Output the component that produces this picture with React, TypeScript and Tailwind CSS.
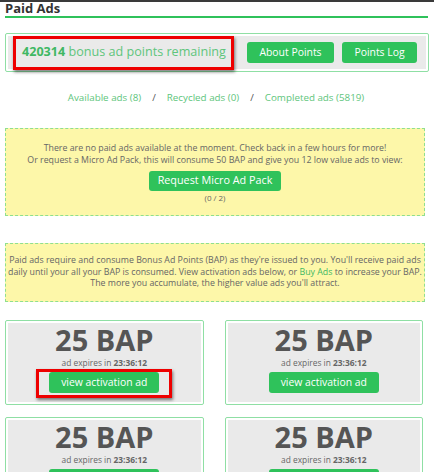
const green = "bg-[#2fc25b]";

function GreenButton({ label, className }: { label: string; className: string }) {
  return (
    <button
      className={`${green} rounded-[3px] text-white leading-none whitespace-nowrap flex items-center justify-center ${className}`}
    >
      {label}
    </button>
  );
}

function AdCard({ highlight }: { highlight?: boolean }) {
  return (
    <div className="border border-[#8fdfa4] rounded-[2px] p-[2px] bg-white">
      <div className="bg-[#eaeaea] h-[79px] flex flex-col items-center">
        <div className="text-[29px] font-bold text-[#555] leading-[30px] mt-[2px]">25 BAP</div>
        <div className="text-[8.4px] text-[#666] leading-[10px] mt-[3px] whitespace-nowrap">
          ad expires in <span className="font-bold">23:36:12</span>
        </div>
        {highlight ? (
          <div className="mt-[1px] border-[3px] border-[#ee0000] shadow-[1px_2px_3px_rgba(0,0,0,0.5)] px-[10px] pb-[2px]">
            <GreenButton label="view activation ad" className="w-[110px] h-[21px] text-[10.4px]" />
          </div>
        ) : (
          <GreenButton label="view activation ad" className="mt-[4px] w-[110px] h-[21px] text-[10.4px]" />
        )}
      </div>
    </div>
  );
}

export default function App() {
  return (
    <div className="w-[434px] h-[472px] overflow-hidden bg-white font-['Open_Sans',sans-serif] text-[#555]">
      <div className="h-[2px] bg-[#3a3a3a]" />
      <div className="px-[5px]">
        <h2 className="text-[13px] font-bold text-[#333] leading-[14px] -mt-[1px]">Paid Ads</h2>
        <div className="mt-[1px] h-[2px] bg-[#2fc25b] mr-[1px]" />

        {/* points summary */}
        <div className="mt-[15px] border border-[#8fdfa4] rounded-[2px] p-[2px] bg-white">
          <div className="bg-[#eaeaea] h-[33px] flex items-center justify-between pr-[9px]">
            <div className="ml-[5px] border-[3px] border-[#ee0000] shadow-[1px_2px_3px_rgba(0,0,0,0.5)] h-[34px] w-[221px] flex items-center pl-[6px] text-[12.6px] text-[#5ec57c] whitespace-nowrap">
              <span className="font-bold text-[#3fb863]">420314</span>&nbsp;bonus ad points remaining
            </div>
            <div className="flex gap-[8px]">
              <GreenButton label="About Points" className="w-[87px] h-[21px] text-[10.4px]" />
              <GreenButton label="Points Log" className="w-[75px] h-[21px] text-[10.4px]" />
            </div>
          </div>
        </div>

        {/* ad lists */}
        <div className="mt-[21px] flex justify-center items-center gap-[11px] text-[9.8px] text-[#5ec57c] leading-none pr-[2px] whitespace-nowrap">
          <span>Available ads (8)</span>
          <span className="text-[#555]">/</span>
          <span>Recycled ads (0)</span>
          <span className="text-[#555]">/</span>
          <span>Completed ads (5819)</span>
        </div>

        <div className="mt-[25px] mr-[4px] border border-dashed border-[#8fdf8f] bg-[#fdf7a9] h-[88px] flex flex-col items-center text-[8.8px] text-[#666] leading-[12px] whitespace-nowrap">
          <p className="mt-[13px]">There are no paid ads available at the moment. Check back in a few hours for more!</p>
          <p>Or request a Micro Ad Pack, this will consume 50 BAP and give you 12 low value ads to view:</p>
          <GreenButton label="Request Micro Ad Pack" className="mt-[5px] w-[132px] h-[20px] text-[10.8px]" />
          <p className="mt-[1px] text-[8px]">(0 / 2)</p>
        </div>

        <div className="mt-[27px] mr-[4px] border border-dashed border-[#8fdf8f] bg-[#fdf7a9] h-[59px] flex flex-col items-center justify-center text-center text-[8.8px] text-[#666] leading-[11.5px] whitespace-nowrap">
          <p>
            Paid ads require and consume Bonus Ad Points (BAP) as they're issued to you. You'll receive paid ads
            <br />
            daily until your all your BAP is consumed. View activation ads below, or{" "}
            <span className="text-[#3fb863]">Buy Ads</span> to increase your BAP.
            <br />
            The more you accumulate, the higher value ads you'll attract.
          </p>
        </div>

        <div className="mt-[18px] mr-[6px] grid grid-cols-2 gap-x-[21px] gap-y-[12px]">
          <AdCard highlight />
          <AdCard />
          <AdCard />
          <AdCard />
        </div>
      </div>
    </div>
  );
}
